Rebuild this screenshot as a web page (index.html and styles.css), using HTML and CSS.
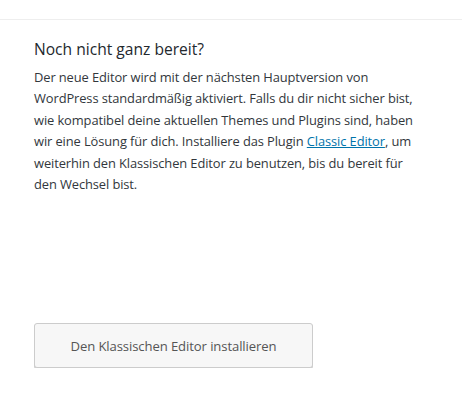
FILE: index.html
```html
<!DOCTYPE html>
<html lang="de">
<head>
<meta charset="utf-8">
<title>Noch nicht ganz bereit?</title>
<link rel="stylesheet" href="styles.css">
</head>
<body>
<div class="topbar"></div>
<section class="panel">
  <h3 class="panel-title">Noch nicht ganz bereit?</h3>
  <p class="panel-text">Der neue Editor wird mit der nächsten Hauptversion von WordPress standardmäßig aktiviert. Falls du dir nicht sicher bist, wie kompatibel deine aktuellen Themes und Plugins sind, haben wir eine Lösung für dich. Installiere das Plugin <a href="#" class="link">Classic Editor</a>, um weiterhin den Klassischen Editor zu benutzen, bis du bereit für den&nbsp;Wechsel bist.</p>
  <div class="actions">
    <button class="button" type="button">Den Klassischen Editor installieren</button>
  </div>
</section>
</body>
</html>
```

FILE: styles.css
```css
html, body {
  margin: 0;
  padding: 0;
  background: #fff;
}
body {
  font-family: "Open Sans", "Noto Sans", sans-serif;
  color: #32373c;
}
.topbar {
  height: 19px;
  border-bottom: 1px solid #eeeeee;
}
.panel {
  padding: 0 34px;
  width: 397px;
}
.panel-title {
  margin: 17px 0 0;
  font-size: 15.6px;
  font-weight: 400;
  line-height: 24px;
  color: #23282d;
}
.panel-text {
  margin: 6px 0 0;
  font-size: 12.9px;
  line-height: 21.4px;
  letter-spacing: -0.1px;
}
.link {
  color: #0073aa;
  text-decoration: underline;
}
.actions {
  margin-top: 128px;
}
.button {
  display: block;
  width: 279px;
  height: 45px;
  padding: 0;
  border: 1px solid #cccccc;
  border-radius: 3px;
  background: #f7f7f7;
  box-shadow: 0 1px 0 #cccccc;
  font-family: "Open Sans", "Noto Sans", sans-serif;
  font-size: 13.1px;
  letter-spacing: -0.1px;
  color: #555555;
}
```
